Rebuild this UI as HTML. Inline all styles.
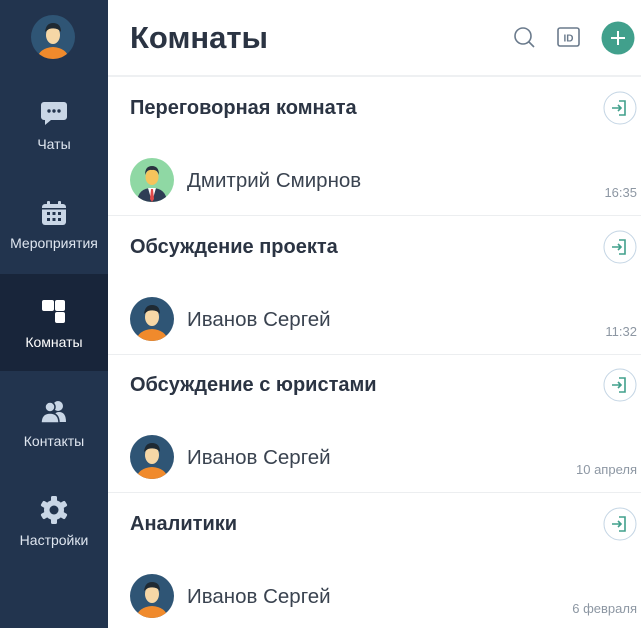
<!DOCTYPE html><html><head><meta charset="utf-8"><style>
*{margin:0;padding:0;box-sizing:border-box}
body{width:641px;height:628px;overflow:hidden;font-family:"Liberation Sans","DejaVu Sans",sans-serif;background:#fff;position:relative}
.side{position:absolute;left:0;top:0;width:108px;height:628px;background:#22344e}
.act{position:absolute;left:0;top:274px;width:108px;height:97px;background:#18253a}
.ic{position:absolute;left:40px}
.lb{position:absolute;left:0;width:108px;text-align:center;color:#dfe6f0;font-size:14px;line-height:16px}
.main{position:absolute;left:108px;top:0;right:0;height:628px}
h1{position:absolute;left:22px;top:20px;font-size:31px;font-weight:bold;color:#2b3443}
.hb{position:absolute;top:75px;left:0;right:0;height:2px;background:#eef0f2}
.room{position:absolute;left:0;right:0;height:139px;border-bottom:1px solid #eceef0}
.t{position:absolute;left:22px;top:20px;font-size:20px;font-weight:bold;color:#2b3443}
.u{position:absolute;left:79px;top:92px;font-size:20.5px;color:#3a4350}
.av{position:absolute;left:22px;top:81px}
.tm{position:absolute;right:4px;top:108px;font-size:13px;color:#8d97a3}
.jn{position:absolute;right:4px;top:14px}
</style></head><body>
<div class="side">
<div class="act"></div>
<svg style="position:absolute;left:31px;top:15px" width="44" height="44" viewBox="0 0 44 44"><use href="#p"/></svg>
<svg class="ic" style="top:100px" width="28" height="28" viewBox="0 0 28 28"><path d="M4 2h20a3 3 0 0 1 3 3v12a3 3 0 0 1-3 3H11l-6 5v-5H4a3 3 0 0 1-3-3V5a3 3 0 0 1 3-3z" fill="#c9d6e6"/><circle cx="9" cy="11" r="1.7" fill="#22344e"/><circle cx="14" cy="11" r="1.7" fill="#22344e"/><circle cx="19" cy="11" r="1.7" fill="#22344e"/></svg>
<div class="lb" style="top:136px">Чаты</div>
<svg class="ic" style="top:199px" width="28" height="28" viewBox="0 0 28 28"><rect x="2" y="5" width="24" height="21" rx="3" fill="#c9d6e6"/><rect x="7" y="2" width="3" height="6" rx="1" fill="#c9d6e6"/><rect x="18" y="2" width="3" height="6" rx="1" fill="#c9d6e6"/><rect x="2" y="9" width="24" height="1.5" fill="#22344e"/><g fill="#22344e"><rect x="7" y="13" width="3" height="3"/><rect x="12.5" y="13" width="3" height="3"/><rect x="18" y="13" width="3" height="3"/><rect x="7" y="19" width="3" height="3"/><rect x="12.5" y="19" width="3" height="3"/><rect x="18" y="19" width="3" height="3"/></g></svg>
<div class="lb" style="top:235px">Мероприятия</div>
<svg class="ic" style="top:298px" width="28" height="28" viewBox="0 0 28 28"><rect x="2" y="2" width="12" height="11" rx="2" fill="#fff"/><rect x="15" y="2" width="10" height="11" rx="2" fill="#fff"/><rect x="15" y="14" width="10" height="11" rx="2" fill="#fff"/></svg>
<div class="lb" style="top:334px;color:#fff">Комнаты</div>
<svg class="ic" style="top:398px" width="28" height="28" viewBox="0 0 28 28"><circle cx="18" cy="8" r="5" fill="#c9d6e6"/><path d="M13 24 Q13 14 19 14 Q26 14 26 24Z" fill="#c9d6e6"/><circle cx="10" cy="9" r="5" stroke="#22344e" stroke-width="1.5" fill="#c9d6e6"/><path d="M1 25 Q1 15 10 15 Q19 15 19 25Z" stroke="#22344e" stroke-width="1.5" fill="#c9d6e6"/></svg>
<div class="lb" style="top:433px">Контакты</div>
<svg class="ic" style="top:496px" width="28" height="28" viewBox="0 0 28 28"><g fill="#c9d6e6" transform="translate(14 14)"><circle r="10"/><rect x="-3" y="-14" width="6" height="28" rx="1.5"/><rect x="-3" y="-14" width="6" height="28" rx="1.5" transform="rotate(60)"/><rect x="-3" y="-14" width="6" height="28" rx="1.5" transform="rotate(120)"/></g><circle cx="14" cy="14" r="4.5" fill="#22344e"/></svg>
<div class="lb" style="top:532px">Настройки</div>
</div>
<div class="main">
<h1>Комнаты</h1>
<svg style="position:absolute;left:405px;top:26px" width="24" height="24" viewBox="0 0 24 24"><circle cx="10" cy="10" r="8" fill="none" stroke="#6a7a8c" stroke-width="1.6"/><path d="M16 16l5 5" stroke="#6a7a8c" stroke-width="1.6"/></svg>
<svg style="position:absolute;left:449px;top:26px" width="24" height="22" viewBox="0 0 24 22"><rect x="1" y="2" width="21" height="18" rx="2" fill="none" stroke="#6a7a8c" stroke-width="1.6"/><text x="11.5" y="15.5" font-size="10" font-weight="bold" text-anchor="middle" fill="#6a7a8c" font-family="Liberation Sans">ID</text></svg>
<svg style="position:absolute;left:493px;top:21px" width="34" height="34" viewBox="0 0 34 34"><circle cx="17" cy="17" r="16.5" fill="#41a08c"/><path d="M17 10v14M10 17h14" stroke="#fff" stroke-width="2"/></svg>
<div class="hb"></div>
<div class="room" style="top:77px"><div class="t">Переговорная комната</div>
<svg class="av" width="44" height="44" viewBox="0 0 44 44"><circle cx="22" cy="22" r="22" fill="#8fd8a4"/><clipPath id="c1"><circle cx="22" cy="22" r="22"/></clipPath><g clip-path="url(#c1)"><path d="M7 44 Q8 30 22 30 Q36 30 37 44Z" fill="#2e3d55"/><path d="M18 30h8l-4 14z" fill="#fff"/><path d="M21 31h2l1 10-2 3-2-3z" fill="#e24a4a"/><ellipse cx="22" cy="19" rx="6.5" ry="8" fill="#f6c45c"/><path d="M15 17 Q15 8 22 8 Q29 8 29 17 Q27 11 22 12 Q17 11 15 17Z" fill="#2a3240"/></g></svg>
<div class="u">Дмитрий Смирнов</div><div class="tm">16:35</div>
<svg class="jn" width="34" height="34" viewBox="0 0 34 34"><use href="#j"/></svg></div>
<div class="room" style="top:216px"><div class="t">Обсуждение проекта</div>
<svg class="av" width="44" height="44" viewBox="0 0 44 44"><use href="#p"/></svg>
<div class="u">Иванов Сергей</div><div class="tm">11:32</div>
<svg class="jn" width="34" height="34" viewBox="0 0 34 34"><use href="#j"/></svg></div>
<div class="room" style="top:354px"><div class="t">Обсуждение с юристами</div>
<svg class="av" width="44" height="44" viewBox="0 0 44 44"><use href="#p"/></svg>
<div class="u">Иванов Сергей</div><div class="tm">10 апреля</div>
<svg class="jn" width="34" height="34" viewBox="0 0 34 34"><use href="#j"/></svg></div>
<div class="room" style="top:493px;border:0"><div class="t">Аналитики</div>
<svg class="av" width="44" height="44" viewBox="0 0 44 44"><use href="#p"/></svg>
<div class="u">Иванов Сергей</div><div class="tm">6 февраля</div>
<svg class="jn" width="34" height="34" viewBox="0 0 34 34"><use href="#j"/></svg></div>
</div>
<svg width="0" height="0" style="position:absolute"><defs>
<g id="p"><circle cx="22" cy="22" r="22" fill="#2f5575"/><clipPath id="c2"><circle cx="22" cy="22" r="22"/></clipPath><g clip-path="url(#c2)"><path d="M6 44 Q8 33 22 32 Q36 33 38 44Z" fill="#f08a2c"/><ellipse cx="22" cy="20" rx="7" ry="9" fill="#f6d7a6"/><path d="M14 17 Q15 8 22 8 Q30 8 30 17 Q26 12 18 14Z" fill="#1f2a33"/></g></g>
<g id="j"><circle cx="17" cy="17" r="16" fill="#fff" stroke="#c4d5e4"/><path d="M16 10h6v14h-6" fill="none" stroke="#41a08c" stroke-width="1.6"/><path d="M9 17h9M15 14l3 3-3 3" fill="none" stroke="#41a08c" stroke-width="1.6"/></g>
</defs></svg>
</body></html>
